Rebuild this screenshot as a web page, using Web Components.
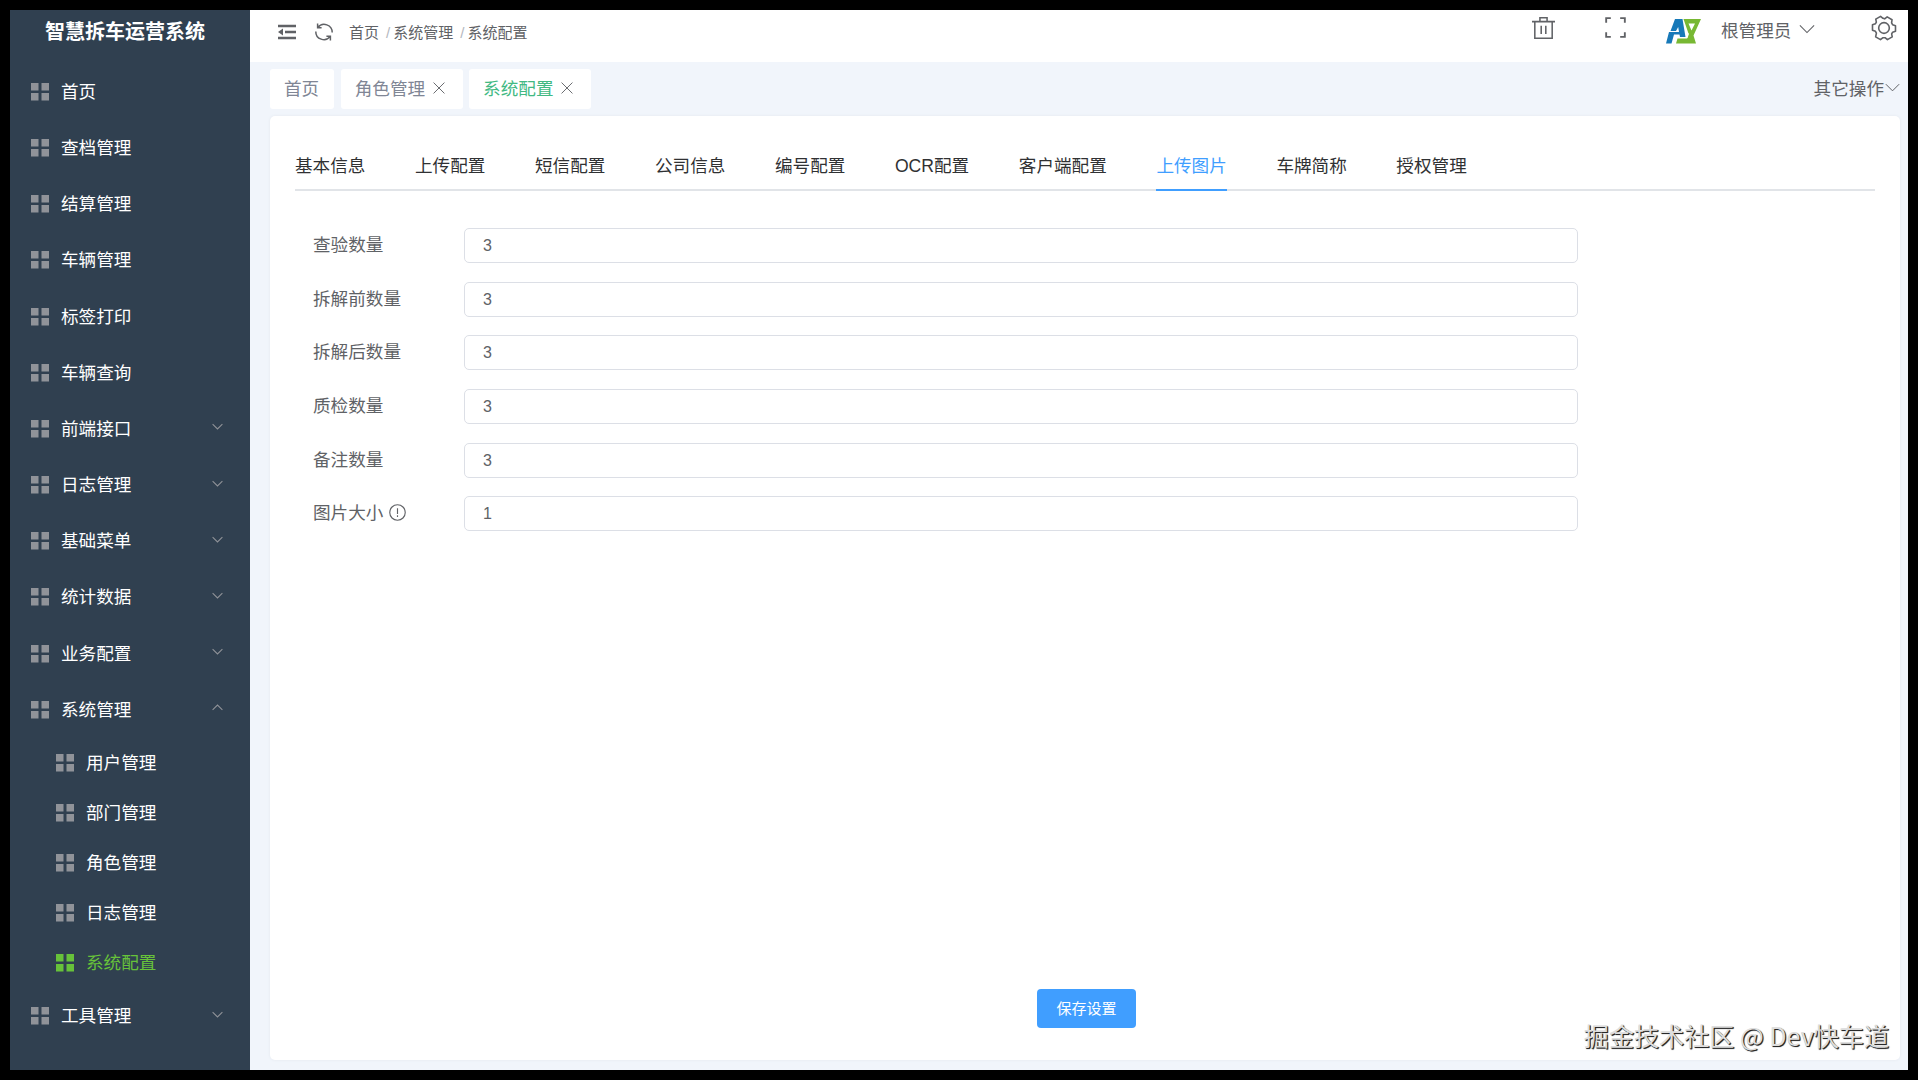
<!DOCTYPE html>
<html lang="zh-CN">
<head>
<meta charset="utf-8">
<title>智慧拆车运营系统</title>
<style>
  html, body { margin: 0; height: 100%; background: #000; }
  body {
    box-sizing: border-box;
    padding: 10px;
    overflow: hidden;
    font-family: "Liberation Sans", "Noto Sans CJK SC", sans-serif;
    font-size: 17.6px;
    color: #606266;
  }
</style>
</head>
<body>
<admin-app></admin-app>

<script>
function define(name, html, setup) {
  const template = document.createElement("template");
  template.innerHTML = html;
  customElements.define(name, class extends HTMLElement {
    constructor() {
      super();
      this.attachShadow({ mode: "open" });
      this.shadowRoot.appendChild(template.content.cloneNode(true));
    }
    connectedCallback() {
      if (setup) setup(this, this.shadowRoot);
    }
  });
}

const icons = {
  grid: `<g fill="currentColor"><path d="M0 0h7.5v7.5H0zM10.5 0H18v7.5h-7.5zM0 10h7.5v7.5H0zM10.5 10H18v7.5h-7.5z"/></g>`,
  down: `<path d="M1 5l8 8 8-8"/>`,
  up: `<path d="M1 13l8-8 8 8"/>`,
  close: `<path d="M2 2l14 14M16 2L2 16"/>`,
  fold: `<path d="M0 3h18M7 9h11M0 15h18" stroke-width="2.6"/><path d="M0 9l5-3.6v7.2z" fill="currentColor" stroke="none"/>`,
  refresh: `<path d="M2.600 .6v4.200h4M2.800 4.600A8 8 0 0 1 17.200 9.600M.8 8.400a8 8 0 0 0 14.400 5M15.400 17.400v-4.200h-4" stroke-width="1.5"/>`,
  trash: `<path d="M0 4h18M2.200 4v13h13.600V4M6.200 4V1h5.600v3M7.200 7.200v6.500M10.800 7.200v6.500"/>`,
  full: `<path d="M1 5V1h4M13 1h4v4M17 13v4h-4M5 17H1v-4"/>`,
  gear: `<circle cx="9" cy="9" r="4"/><path transform="rotate(30 9 9)" stroke-linejoin="round" d="M6.900 .6h4.200l.9 2.200 1.300.8 2.300-.4 2.100 3.600-1.500 1.700v1.500l1.500 1.700-2.100 3.600-2.300-.4-1.300.8-.9 2.200H6.900L6 15.200l-1.300-.8-2.300.4L.3 11.200l1.500-1.700V8L.3 6.300l2.100-3.600 2.300.4L6 2.800z"/>`,
  info: `<circle cx="9" cy="9" r="8.200"/><path d="M9 4.500v6M9 12v1.700"/>`
};

define("ui-icon", `
  <style>
    :host { display: inline-flex; flex: none; width: 18px; height: 18px; }
    svg { width: 100%; height: 100%; overflow: visible; fill: none; stroke: currentColor; stroke-width: var(--stroke, 1.2); }
  </style>
  <svg viewBox="0 0 18 18"></svg>
`, (el, root) => {
  root.querySelector("svg").innerHTML = icons[el.getAttribute("name")];
  if (el.getAttribute("name") === "grid") root.querySelector("svg").style.stroke = "none";
});

define("menu-item", `
  <style>
    :host { display: flex; align-items: center; box-sizing: border-box; height: 56.2px; padding: 0 27px 0 21px; color: #fff; }
    :host([sub]) { height: 50px; padding-left: 46px; }
    :host([active]) { color: #67c23a; }
    .grid { color: #909399; margin-right: 12px; }
    :host([active]) .grid { color: #67c23a; }
    .text { flex: 1; line-height: 24px; }
    .arrow { width: 11px; height: 11px; color: #909399; margin-bottom: 4px; --stroke: 1.7; }
  </style>
  <ui-icon class="grid" name="grid"></ui-icon>
  <span class="text"><slot></slot></span>
`, (el, root) => {
  if (!el.hasAttribute("arrow")) return;
  const arrow = document.createElement("ui-icon");
  arrow.className = "arrow";
  arrow.setAttribute("name", el.getAttribute("arrow"));
  root.appendChild(arrow);
});

define("side-menu", `
  <style>
    :host { display: block; width: 240px; flex: none; background: #304050; }
    h1 { box-sizing: border-box; margin: 0; height: 53.700px; padding: 1px 10px 0 0; font-size: 20px; line-height: 43px; text-align: center; color: #fff; }
  </style>
  <h1>智慧拆车运营系统</h1>
  <menu-item>首页</menu-item>
  <menu-item>查档管理</menu-item>
  <menu-item>结算管理</menu-item>
  <menu-item>车辆管理</menu-item>
  <menu-item>标签打印</menu-item>
  <menu-item>车辆查询</menu-item>
  <menu-item arrow="down">前端接口</menu-item>
  <menu-item arrow="down">日志管理</menu-item>
  <menu-item arrow="down">基础菜单</menu-item>
  <menu-item arrow="down">统计数据</menu-item>
  <menu-item arrow="down">业务配置</menu-item>
  <menu-item arrow="up">系统管理</menu-item>
  <menu-item sub>用户管理</menu-item>
  <menu-item sub>部门管理</menu-item>
  <menu-item sub>角色管理</menu-item>
  <menu-item sub>日志管理</menu-item>
  <menu-item sub active>系统配置</menu-item>
  <menu-item arrow="down">工具管理</menu-item>
`);

define("top-bar", `
  <style>
    :host { display: flex; align-items: flex-start; box-sizing: border-box; height: 52px; padding: 0 12px 0 28px; background: #fff; }
    .fold { margin-top: 13px; }
    .refresh { margin: 13px 0 0 19px; }
    .crumbs { display: flex; flex: 1; margin: 11px 0 0 16px; font-size: 15px; line-height: 24px; white-space: pre; }
    .crumbs i { width: 14.200px; text-align: center; font-style: normal; color: #b4b8c0; box-sizing: border-box; padding-left: 4px; }
    .trash { width: 23px; height: 24px; margin: 6px 50px 0 0; }
    .full { width: 21px; height: 21px; margin: 7px 40px 0 0; --stroke: 1.6; }
    .logo { width: 35px; height: 25px; margin: 9px 20px 0 0; }
    .user { width: 70px; margin-top: 9px; line-height: 24px; white-space: nowrap; }
    .caret { width: 16px; height: 16px; margin: 11px 57px 0 8px; }
    .gear { width: 24px; height: 24px; margin-top: 6px; }
  </style>
  <ui-icon class="fold" name="fold"></ui-icon>
  <ui-icon class="refresh" name="refresh"></ui-icon>
  <div class="crumbs"><span>首页</span><i>/</i><span>系统管理</span><i>/</i><span>系统配置</span></div>
  <ui-icon class="trash" name="trash"></ui-icon>
  <ui-icon class="full" name="full"></ui-icon>
  <svg class="logo" viewBox="0 0 35 25">
    <path d="M9 0h7.500l3 18h-5.500l-.5-2.500H8L5.500 24.500H0L3 13h10l-.8-5-2.200 4H4.500z" fill="#1779b8"/>
    <path d="M17.500 0H35l-7.500 16.500 2.500 8H10l1.500-5h9.500l1.500-5z" fill="#78b833"/>
    <path d="M22.500 4.500h6.500l-3.500 7zM19.500 14l3.500.5-1.500 5z" fill="#fff"/>
  </svg>
  <span class="user">根管理员</span>
  <ui-icon class="caret" name="down"></ui-icon>
  <ui-icon class="gear" name="gear"></ui-icon>
`);

define("page-tab", `
  <style>
    :host { display: flex; align-items: center; box-sizing: border-box; height: 40px; padding: 0 15px 4px 14px; background: #fff; border-radius: 3px; color: #808695; }
    :host([active]) { color: #42b983; }
    ui-icon { width: 14px; height: 14px; margin: 1px 2px 0 6.500px; color: #606266; }
  </style>
  <slot></slot>
`, (el, root) => {
  if (el.hasAttribute("closable")) {
    const close = document.createElement("ui-icon");
    close.setAttribute("name", "close");
    root.appendChild(close);
  }
});

define("tab-bar", `
  <style>
    :host { display: flex; align-items: center; gap: 6.500px; height: 54px; padding: 0 8px 0 20px; }
    .more { display: flex; align-items: center; margin-left: auto; padding-bottom: 4px; }
    .more ui-icon { width: 15px; height: 15px; margin-left: 1px; }
  </style>
  <page-tab>首页</page-tab>
  <page-tab closable>角色管理</page-tab>
  <page-tab closable active>系统配置</page-tab>
  <span class="more">其它操作<ui-icon name="down"></ui-icon></span>
`);

define("config-tabs", `
  <style>
    :host { display: flex; gap: 49.600px; box-sizing: border-box; height: 50px; box-shadow: inset 0 -2px #e1e4e8; color: #303133; line-height: 51px; }
    span.on { color: #409eff; box-shadow: inset 0 -2px #409eff; }
  </style>
`, (el, root) => {
  const names = ["基本信息", "上传配置", "短信配置", "公司信息", "编号配置", "OCR配置", "客户端配置", "上传图片", "车牌简称", "授权管理"];
  for (const name of names) {
    const span = document.createElement("span");
    span.textContent = name;
    if (name === "上传图片") span.className = "on";
    root.appendChild(span);
  }
});

define("form-row", `
  <style>
    :host { display: flex; align-items: flex-start; height: 53.650px; }
    .label { display: flex; align-items: center; width: 151px; height: 31px; }
    .input { flex: 1; box-sizing: border-box; height: 35px; padding-left: 18px; border: 1px solid #dcdfe6; border-radius: 5px; font-size: 16px; line-height: 33px; }
  </style>
  <div class="label"><slot></slot></div>
  <div class="input"></div>
`, (el, root) => {
  root.querySelector(".input").textContent = el.getAttribute("value");
});

define("config-panel", `
  <style>
    :host { display: flex; flex-direction: column; flex: 1; box-sizing: border-box; margin: 0 8px 10px 20px; padding: 25px 25px 32px; background: #fff; border-radius: 5px; box-shadow: 0 0 3px #e3e7ee; }
    .form { flex: 1; width: 1283px; box-sizing: border-box; padding: 37px 0 0 18px; }
    form-row ui-icon { width: 17px; height: 17px; margin: 2px 0 0 6px; }
    button { align-self: center; width: 99px; height: 39px; margin-left: 3px; padding: 0 0 2px; border: 0; border-radius: 4px; background: #409eff; color: #fff; font: inherit; font-size: 15px; }
  </style>
  <config-tabs></config-tabs>
  <div class="form">
    <form-row value="3">查验数量</form-row>
    <form-row value="3">拆解前数量</form-row>
    <form-row value="3">拆解后数量</form-row>
    <form-row value="3">质检数量</form-row>
    <form-row value="3">备注数量</form-row>
    <form-row value="1">图片大小<ui-icon name="info"></ui-icon></form-row>
  </div>
  <button>保存设置</button>
`);

define("admin-app", `
  <style>
    :host { display: flex; position: relative; height: 1060px; background: #f1f5fb; }
    main { display: flex; flex-direction: column; flex: 1; min-width: 0; }
    .mark { position: absolute; right: 19px; bottom: 17px; font: 25.100px/36px "Noto Sans CJK SC", sans-serif; color: #dedede; text-shadow: 1px 1px 1px #222, 1px 1px 0 #555; white-space: pre; }
  </style>
  <side-menu></side-menu>
  <main>
    <top-bar></top-bar>
    <tab-bar></tab-bar>
    <config-panel></config-panel>
  </main>
  <div class="mark">掘金技术社区 @ Dev快车道</div>
`);
</script>
</body>
</html>
